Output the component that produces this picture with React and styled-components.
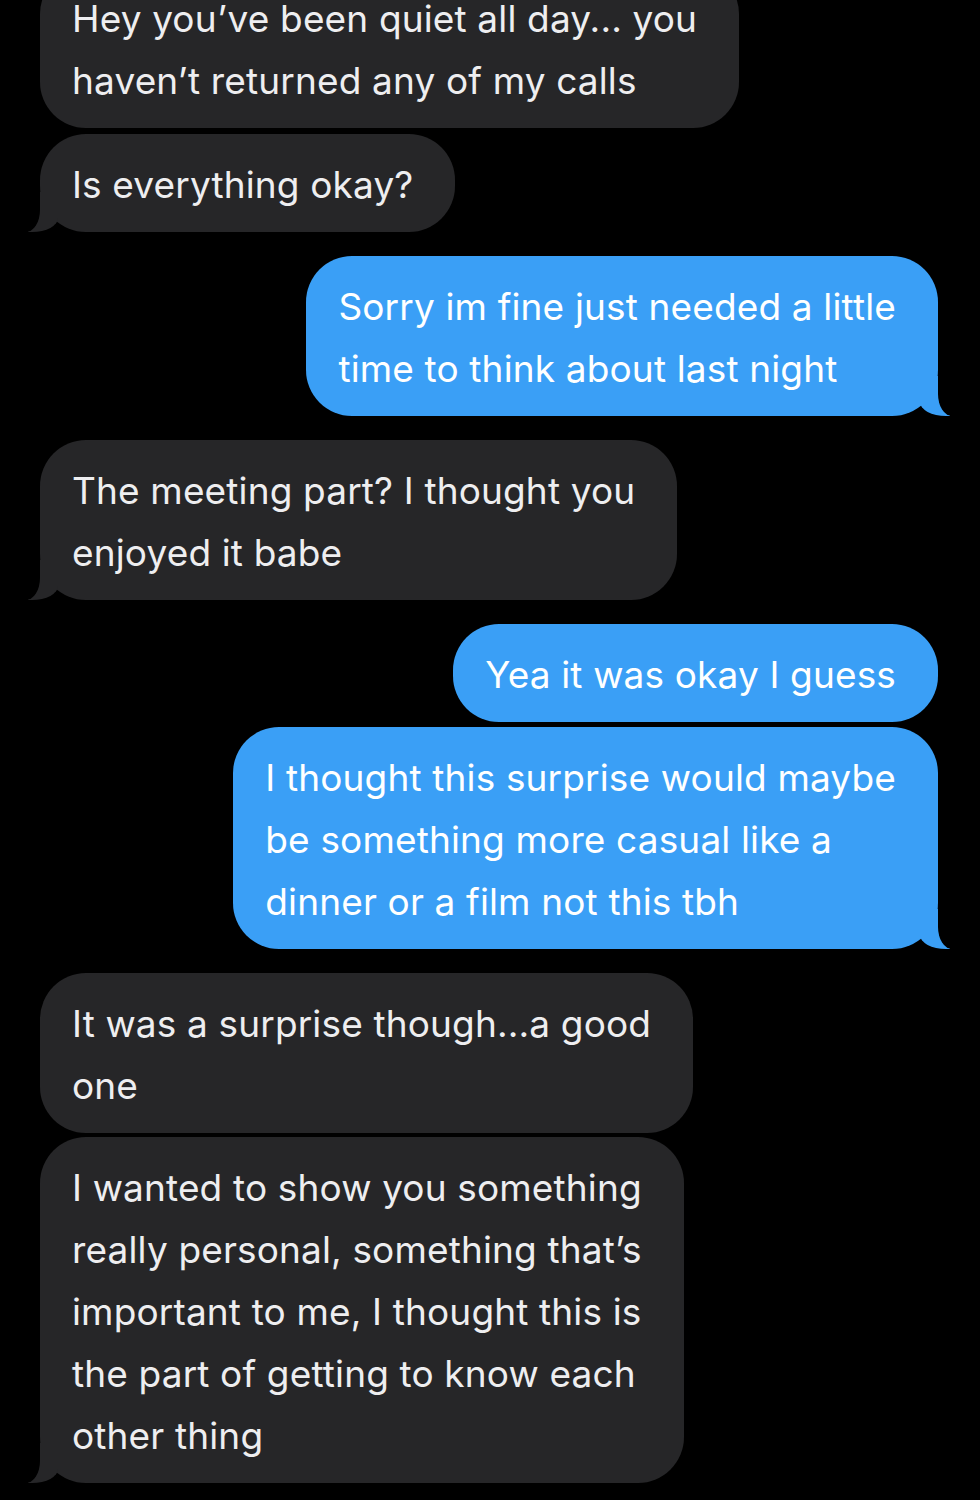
import React from "react";
import styled, { createGlobalStyle, css } from "styled-components";

const GlobalStyle = createGlobalStyle`
  html, body {
    margin: 0;
    padding: 0;
    background: #000;
  }
  body {
    width: 980px;
    height: 1500px;
    overflow: hidden;
    font-family: Inter, "Noto Sans", "Liberation Sans", sans-serif;
  }
`;

const GRAY = "#262628";
const BLUE = "#3a9ff6";

const Thread = styled.div`
  display: flex;
  flex-direction: column;
  margin-top: -32px;
  padding: 0 42px 0 40px;
`;

// tail = a coloured block with a carved notch, then a black block that cuts the outer curve
const tailRight = css`
  &::before {
    content: "";
    position: absolute;
    bottom: 0;
    right: -12px;
    width: 30px;
    height: 40px;
    background: ${BLUE};
    border-bottom-left-radius: 26px 14px;
  }
  &::after {
    content: "";
    position: absolute;
    bottom: 0;
    right: -40px;
    width: 40px;
    height: 42px;
    background: #000;
    border-bottom-left-radius: 14px 22px;
  }
`;

const tailLeft = css`
  &::before {
    content: "";
    position: absolute;
    bottom: 0;
    left: -12px;
    width: 30px;
    height: 40px;
    background: ${GRAY};
    border-bottom-right-radius: 26px 14px;
  }
  &::after {
    content: "";
    position: absolute;
    bottom: 0;
    left: -40px;
    width: 40px;
    height: 42px;
    background: #000;
    border-bottom-right-radius: 14px 22px;
  }
`;

const Bubble = styled.div`
  position: relative;
  align-self: ${({ $me }) => ($me ? "flex-end" : "flex-start")};
  box-sizing: border-box;
  padding: 20px 42px 16px 32px;
  border-radius: 46px;
  background: ${({ $me }) => ($me ? BLUE : GRAY)};
  color: ${({ $me }) => ($me ? "#ffffff" : "#eeeef0")};
  font-size: 37px;
  line-height: 62px;
  letter-spacing: 0.15px;
  white-space: nowrap;
  margin-top: ${({ $gap }) => $gap}px;

  ${({ $tail, $me }) => $tail && ($me ? tailRight : tailLeft)}
`;

const Line = styled.span`
  display: block;
  position: relative;
  z-index: 1;
`;

const messages = [
  { me: false, gap: 0, tail: false, lines: ["Hey you\u2019ve been quiet all day... you", "haven\u2019t returned any of my calls"] },
  { me: false, gap: 6, tail: true, lines: ["Is everything okay?"] },
  { me: true, gap: 24, tail: true, lines: ["Sorry im fine just needed a little", "time to think about last night"] },
  { me: false, gap: 24, tail: true, lines: ["The meeting part? I thought you", "enjoyed it babe"] },
  { me: true, gap: 24, tail: false, lines: ["Yea it was okay I guess"] },
  { me: true, gap: 5, tail: true, lines: ["I thought this surprise would maybe", "be something more casual like a", "dinner or a film not this tbh"] },
  { me: false, gap: 24, tail: false, lines: ["It was a surprise though...a good", "one"] },
  {
    me: false,
    gap: 4,
    tail: true,
    lines: [
      "I wanted to show you something",
      "really personal, something that\u2019s",
      "important to me, I thought this is",
      "the part of getting to know each",
      "other thing",
    ],
  },
];

export default function App() {
  return (
    <>
      <GlobalStyle />
      <Thread>
        {messages.map((m, i) => (
          <Bubble key={i} $me={m.me} $gap={m.gap} $tail={m.tail}>
            {m.lines.map((l, j) => (
              <Line key={j}>{l}</Line>
            ))}
          </Bubble>
        ))}
      </Thread>
    </>
  );
}
